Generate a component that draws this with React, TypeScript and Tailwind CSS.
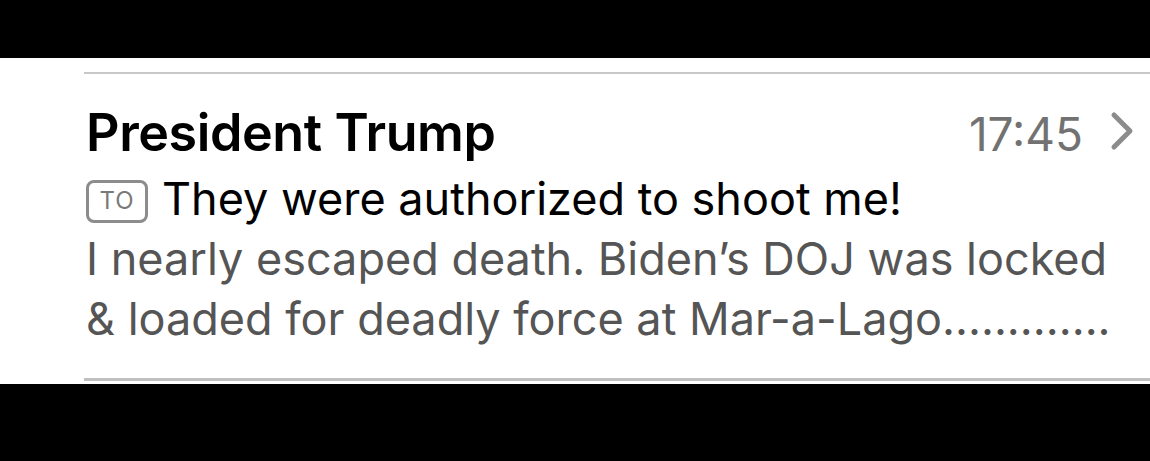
export default function App() {
  return (
    <div className="w-[1150px] h-[461px] bg-black flex flex-col overflow-hidden" style={{ fontFamily: "Inter, 'Noto Sans', sans-serif" }}>
      <div className="h-[58px] shrink-0" />
      <div className="h-[326px] shrink-0 bg-white pl-[84px] flex flex-col">
        <div className="h-[14px] shrink-0" />
        <div className="h-[2px] bg-[#c8c8c8] shrink-0" />
        <div className="flex items-baseline justify-between pr-[15px] pt-[31px] h-[95px] shrink-0">
          <div className="pl-[2px] text-[52px] leading-[56px] font-semibold text-black tracking-[-0.4px]">President Trump</div>
          <div className="flex items-baseline gap-[27px] text-[46px] leading-[56px] text-[#727272]">
            <span>17:45</span>
            <svg width="25" height="40" viewBox="0 0 25 40" fill="none" stroke="#8c8c8c" strokeWidth="5" strokeLinecap="round" strokeLinejoin="round" className="mb-[-3px]">
              <path d="M4 4 L20 20 L4 36" />
            </svg>
          </div>
        </div>
        <div className="flex items-center gap-[14px] h-[60px] text-[45px] leading-[60px] text-black pl-[2px]">
          <span className="w-[62px] h-[43px] mt-[4px] flex items-center justify-center border-[3px] border-[#8c8c8c] rounded-[8px] text-[#7a7a7a] text-[24px] leading-none tracking-[1px]">TO</span>
          <span>They were authorized to shoot me!</span>
        </div>
        <div className="text-[45px] leading-[60px] text-[#555555] pl-[2px]">
          I nearly escaped death. Biden’s DOJ was locked
          <br />& loaded for deadly force at Mar-a-Lago.............
        </div>
        <div className="flex-1" />
        <div className="h-[3px] bg-[#c0c0c0] shrink-0 mb-[3px]" />
      </div>
    </div>
  );
}
